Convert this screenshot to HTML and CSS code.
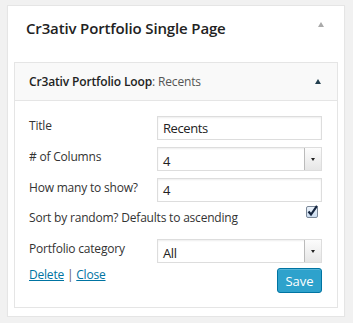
FILE: index.html
```html
<!DOCTYPE html>
<html lang="en">
<head>
    <meta charset="UTF-8">
    <meta name="viewport" content="width=device-width, initial-scale=1.0">
    <title>Widget</title>
    <link rel="stylesheet" href="styles.css">
</head>
<body>

<!-- sidebar panel -->
<div class="sidebar">
    <div class="sidebar-head">
        <h2 class="sidebar-title">Cr3ativ Portfolio Single Page</h2>
        <span class="arrow arrow-light"></span>
    </div>

    <!-- widget -->
    <div class="widget">
        <div class="widget-top">
            <h3 class="widget-title">Cr3ativ Portfolio Loop<span class="in-title">: Recents</span></h3>
            <span class="arrow arrow-dark"></span>
        </div>

        <div class="widget-inside">
            <div class="row">
                <label class="label">Title</label>
                <div class="field">Recents</div>
            </div>

            <div class="row">
                <label class="label"># of Columns</label>
                <div class="field select">
                    <span class="value">4</span>
                    <span class="select-btn"><span class="caret"></span></span>
                </div>
            </div>

            <div class="row">
                <label class="label">How many to show?</label>
                <div class="field">4</div>
            </div>

            <div class="row row-check">
                <label class="label">Sort by random? Defaults to ascending</label>
                <svg class="checkbox" width="12" height="13" viewBox="0 0 12 13">
                    <defs>
                        <linearGradient id="cb" x1="0" y1="0" x2="0" y2="1">
                            <stop offset="0" stop-color="#eef4fb"/>
                            <stop offset="1" stop-color="#c9dbef"/>
                        </linearGradient>
                    </defs>
                    <rect x="0.5" y="1.5" width="11" height="11" rx="1.5" fill="url(#cb)" stroke="#7a8797"/>
                    <path d="M2.5 6.5 L5 9.5 L11 0.8" fill="none" stroke="#15253f" stroke-width="2.2"/>
                </svg>
            </div>

            <div class="row">
                <label class="label">Portfolio category</label>
                <div class="field select">
                    <span class="value">All</span>
                    <span class="select-btn"><span class="caret"></span></span>
                </div>
            </div>

            <div class="widget-control">
                <div class="links">
                    <a href="#">Delete</a> | <a href="#">Close</a>
                </div>
                <button class="button-primary">Save</button>
            </div>
        </div>
    </div>
</div>

</body>
</html>
```

FILE: styles.css
```css
/* page */
body {
    font-family: 'Open Sans', 'Noto Sans', sans-serif;
    background-color: #f1f1f1;
    color: #333;
    margin: 0;
    padding: 5px 8px 0 7px;
    font-size: 12px;
    letter-spacing: -0.2px;
}

/* outer sidebar panel */
.sidebar {
    background: #fff;
    border: 1px solid #e5e5e5;
    box-shadow: 0 1px 1px rgba(0, 0, 0, 0.04);
    padding: 0 6px 8px;
}

.sidebar-head {
    display: flex;
    justify-content: space-between;
    align-items: center;
    height: 56px;
    padding: 0 14px 0 12px;
}

.sidebar-title {
    margin: 0;
    font-size: 15px;
    font-weight: 600;
    letter-spacing: -0.15px;
    color: #222;
    position: relative;
    top: -6px;
}

.arrow {
    width: 0;
    height: 0;
    border-left: 3.5px solid transparent;
    border-right: 3.5px solid transparent;
}

.arrow-light {
    border-bottom: 5px solid #aaa;
    position: relative;
    top: -10px;
}

.arrow-dark {
    border-bottom: 5px solid #23404f;
}

/* widget box */
.widget {
    border: 1px solid #e5e5e5;
}

.widget-top {
    display: flex;
    justify-content: space-between;
    align-items: center;
    height: 37px;
    padding: 0 16px 0 14px;
    background: #f9f9f9;
    border-bottom: 1px solid #e5e5e5;
}

.widget-title {
    margin: 0;
    font-size: 12px;
    font-weight: 600;
    letter-spacing: -0.15px;
    color: #222;
}

.in-title {
    font-weight: 400;
    color: #555;
}

.widget-inside {
    padding: 15px 15px 14px 14px;
    background: #fff;
}

/* form rows */
.row {
    display: flex;
    justify-content: space-between;
    align-items: flex-start;
    margin-bottom: 7px;
}

.label {
    color: #333;
    padding-top: 1px;
}

.field {
    box-sizing: border-box;
    width: 165px;
    height: 24px;
    border: 1px solid #ddd;
    box-shadow: inset 0 1px 2px rgba(0, 0, 0, 0.07);
    padding: 3px 5px 0;
    color: #222;
    font-size: 13px;
    letter-spacing: -0.4px;
    line-height: 17px;
}

.select {
    display: flex;
    justify-content: space-between;
    padding: 0 0 0 5px;
    line-height: 22px;
}

.select .value {
    padding-top: 2px;
}

.select-btn {
    width: 16px;
    height: 22px;
    background: linear-gradient(#fcfcfc, #e6e6e6);
    border-left: 1px solid #bbb;
    display: flex;
    align-items: center;
    justify-content: center;
}

.caret {
    width: 0;
    height: 0;
    border-left: 2.5px solid transparent;
    border-right: 2.5px solid transparent;
    border-top: 3px solid #222;
}

.row-check {
    margin-top: -4px;
    margin-bottom: 0;
    height: 34px;
    padding-right: 4px;
}

.row-check .label {
    padding-top: 4px;
}

.checkbox {
    display: block;
}

/* bottom controls */
.widget-control {
    display: flex;
    justify-content: space-between;
    align-items: flex-start;
    margin-top: -2px;
}

.links {
    color: #555;
    margin-top: -2px;
}

.links a {
    color: #0074a2;
    text-decoration: underline;
}

.button-primary {
    font-family: inherit;
    font-size: 13px;
    color: #fff;
    background: #2ea2cc;
    border: 1px solid #0074a2;
    border-radius: 3px;
    box-shadow: inset 0 1px 0 rgba(120, 200, 230, 0.5);
    width: 45px;
    height: 25px;
    padding: 0;
    cursor: pointer;
}
```
